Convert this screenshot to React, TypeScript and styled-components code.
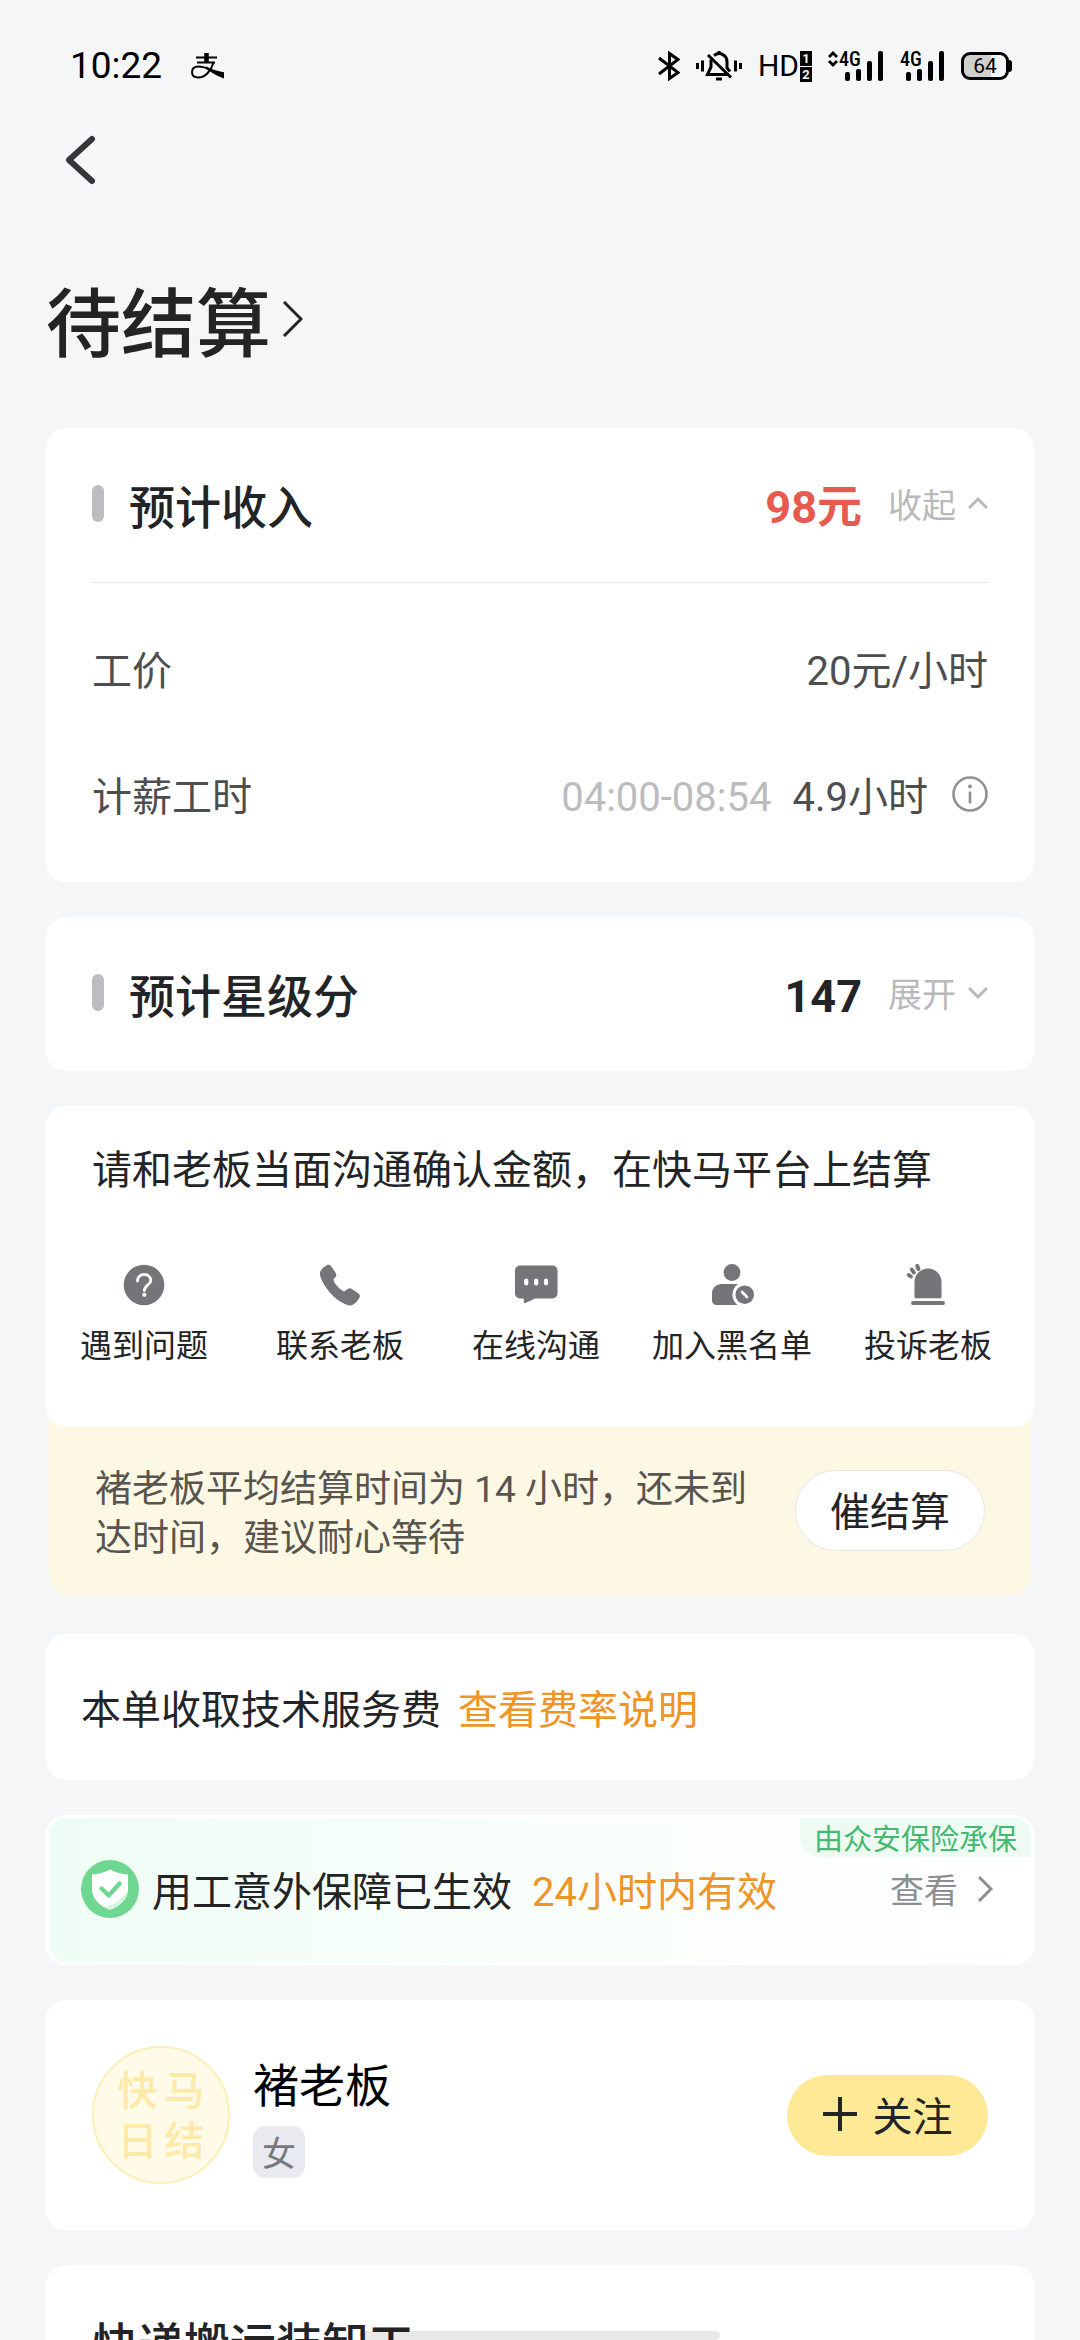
import React, { useState } from 'react';
import styled, { createGlobalStyle } from 'styled-components';

const CJK = `'Noto Sans CJK SC', sans-serif`;
const MIXED = `Roboto, 'Noto Sans CJK SC', sans-serif`;

const GlobalStyle = createGlobalStyle`
  * { box-sizing: border-box; }
  body { margin: 0; background: #f5f6f8; font-family: ${CJK}; color: #232426; }
  h1, h2, p, dl, dt, dd { margin: 0; font-weight: 400; }
  button { margin: 0; padding: 0; border: 0; background: none; font: inherit; color: inherit; cursor: pointer; }
  a { color: inherit; text-decoration: none; }
  svg { display: block; flex: none; }
`;

const Page = styled.div`
  height: 100vh;
  overflow: hidden;
`;

const StatusBar = styled.header`
  display: flex;
  align-items: center;
  justify-content: space-between;
  height: 132px;
  padding: 0 68px 0 70px;
  color: #000;
  font-family: Roboto, sans-serif;
`;

const StatusGroup = styled.div<{ $gap: number }>`
  display: flex;
  align-items: center;
  gap: ${(p) => p.$gap}px;
`;

const Clock = styled.time`
  font-size: 37px;
  line-height: 44px;
`;

const Network = styled.span`
  display: flex;
  align-items: center;
  gap: 1px;
`;

const HdText = styled.span`
  font-size: 30px;
  line-height: 36px;
`;

const SimBox = styled.span`
  display: grid;
  gap: 1px;
`;

const SimNumber = styled.span`
  width: 12px;
  height: 15px;
  background: #000;
  color: #f5f6f8;
  font-size: 13px;
  font-weight: 700;
  line-height: 15px;
  text-align: center;
`;

const Signal = styled.span`
  display: grid;
  grid-template-columns: auto auto;
  align-items: start;
  height: 30px;
`;

const SignalLabel = styled.span`
  grid-area: 1 / 1;
  font-size: 20px;
  font-weight: 500;
  line-height: 16px;
  font-family: 'Liberation Sans Narrow', 'Roboto Condensed', Roboto, sans-serif;
`;

const SignalBars = styled.svg`
  grid-area: 1 / 1 / 2 / 3;
  margin-left: 6px;
`;

const Battery = styled.span`
  display: flex;
  align-items: center;
`;

const BatteryBody = styled.span`
  width: 48px;
  height: 28px;
  border: 3px solid #000;
  border-radius: 9px;
  background: linear-gradient(90deg, #cfcfd0 64%, transparent 64%);
  font-size: 21px;
  font-weight: 400;
  line-height: 22px;
  text-align: center;
`;

const BatteryTip = styled.span`
  width: 3px;
  height: 12px;
  border-radius: 0 3px 3px 0;
  background: #000;
`;

const NavBar = styled.nav`
  display: flex;
  height: 56px;
  padding: 0 60px;
`;

const BackButton = styled.button`
  display: grid;
  place-items: center;
  width: 40px;
`;

const Title = styled.h1`
  padding: 75px 46px 53px;
`;

const TitleButton = styled.button`
  display: flex;
  align-items: center;
  gap: 11px;
  font-size: 75px;
  font-weight: 500;
  line-height: 112px;
`;

const Content = styled.main`
  display: flex;
  flex-direction: column;
  gap: 35px;
  padding: 0 46px;
`;

const Card = styled.section`
  flex: none;
  border-radius: 20px;
  background: #fff;
`;

const SectionHead = styled.div`
  display: flex;
  align-items: center;
  height: 154px;
  margin: 0 46px;
  padding-bottom: 3px;
`;

const Marker = styled.span`
  width: 12px;
  height: 37px;
  margin-right: 25px;
  border-radius: 6px;
  background: #bdbdc1;
`;

const Heading = styled.h2`
  flex: 1;
  font-size: 46px;
  font-weight: 500;
  line-height: 64px;
`;

const Amount = styled.strong<{ $color?: string }>`
  color: ${(p) => p.$color ?? '#232426'};
  font-size: 45px;
  font-weight: 700;
  line-height: 64px;
`;

const Mixed = styled.span`
  font-family: ${MIXED};
  line-height: 1;
`;

const Toggle = styled.button`
  display: flex;
  align-items: center;
  gap: 12px;
  margin-left: 26px;
  color: #b9b9bb;
  font-size: 34px;
  line-height: 48px;
`;

const Details = styled.dl`
  margin: 0 46px;
  padding: 22px 0 25px;
  border-top: 1px solid #e9e9ea;
`;

const DetailRow = styled.div`
  display: flex;
  align-items: center;
  justify-content: space-between;
  height: 126px;
  color: #4d4e50;
  font-size: 40px;
  line-height: 56px;
`;

const DetailValue = styled.dd`
  display: flex;
  align-items: center;
`;

const Muted = styled.span`
  margin-right: 21px;
  color: #bcbcbe;
`;

const InfoButton = styled.button`
  margin-left: 24px;
`;

const SettleCard = styled(Card)`
  display: flex;
  flex-direction: column;
  gap: 67px;
  height: 320px;
  padding-top: 32px;
`;

const Prompt = styled.p`
  padding: 0 46px;
  font-size: 40px;
  line-height: 58px;
`;

const Actions = styled.div`
  display: grid;
  grid-template-columns: repeat(5, 1fr);
  padding-right: 8px;
`;

const Action = styled.button`
  display: flex;
  flex-direction: column;
  align-items: center;
  gap: 12px;
  font-size: 32px;
  line-height: 48px;
  white-space: nowrap;
`;

const SettleGroup = styled.div`
  margin: 0 3px 4px;
  border-radius: 20px;
  background: #fdf8e4;

  > ${Card} { margin: 0 -3px; }
`;

const Notice = styled.div`
  display: flex;
  align-items: center;
  justify-content: space-between;
  gap: 36px;
  height: 169px;
  padding: 0 46px;
`;

const NoticeText = styled.p`
  color: #57554e;
  font-size: 37px;
  line-height: 49px;
`;

const PillButton = styled.button<{ $width: number; $fill: string; $border?: string }>`
  display: flex;
  flex: none;
  align-items: center;
  justify-content: center;
  gap: 16px;
  width: ${(p) => p.$width}px;
  height: 81px;
  padding-bottom: 3px;
  border: 1px solid ${(p) => p.$border ?? 'transparent'};
  border-radius: 41px;
  background: ${(p) => p.$fill} border-box;
  font-size: 40px;
  line-height: 56px;
`;

const FeeCard = styled(Card)`
  display: flex;
  align-items: center;
  gap: 17px;
  height: 146px;
  padding: 0 35px;
  font-size: 40px;
  line-height: 56px;
`;

const FeeLink = styled.a`
  color: #ee9526;
`;

const InsuranceCard = styled(Card)`
  position: relative;
  display: flex;
  align-items: center;
  height: 150px;
  padding: 0 38px 2px 32px;
  border: 3px solid #fff;
  background: linear-gradient(90deg, #effcf5, #f8fefa 45%, #fff);
  font-size: 40px;
  line-height: 56px;
`;

const InsuranceText = styled.span`
  margin-left: 13px;
`;

const Validity = styled.span`
  flex: 1;
  margin-left: 20px;
  color: #ee9526;
`;

const ViewLink = styled.a`
  display: flex;
  align-items: center;
  gap: 20px;
  color: #8d8e90;
  font-size: 34px;
  line-height: 48px;
`;

const Insurer = styled.span`
  position: absolute;
  top: 0;
  right: 0;
  padding: 0 14px;
  border-radius: 0 17px 0 20px;
  background: #edfbf2;
  color: #45b970;
  font-size: 29px;
  line-height: 39px;
`;

const BossCard = styled(Card)`
  display: flex;
  align-items: center;
  height: 230px;
  padding: 0 46px;
`;

const Avatar = styled.span`
  display: grid;
  grid-template-columns: 40px 40px;
  place-content: center;
  column-gap: 7px;
  width: 138px;
  height: 138px;
  padding-bottom: 4px;
  border: 2px solid #fbefb4;
  border-radius: 50%;
  background: #fffbe8;
  color: #fde9a8;
  font-size: 40px;
  font-weight: 500;
  line-height: 50px;
`;

const BossInfo = styled.div`
  display: flex;
  flex: 1;
  flex-direction: column;
  align-items: flex-start;
  gap: 14px;
  margin-left: 23px;
`;

const BossName = styled.h2`
  color: #000;
  font-size: 46px;
  line-height: 60px;
`;

const GenderTag = styled.span`
  width: 52px;
  border-radius: 12px;
  background: #e9eaf0;
  color: #77787b;
  font-size: 34px;
  line-height: 52px;
  text-align: center;
`;

const JobCard = styled(Card)`
  padding: 44px 46px;
`;

const HomeIndicator = styled.div`
  position: fixed;
  bottom: 0;
  left: 50%;
  width: 360px;
  height: 9px;
  margin-left: -180px;
  border-radius: 5px;
  background: rgba(0, 0, 0, 0.09);
`;

const Chevron = ({ d, w, h, stroke = 3 }: { d: string; w: number; h: number; stroke?: number }) => (
  <svg width={w} height={h} viewBox={`0 0 ${w} ${h}`} fill="none" stroke="currentColor" strokeWidth={stroke} aria-hidden="true">
    <path d={d} />
  </svg>
);

const AlipayMark = () => (
  <svg width="34" height="26" viewBox="0 0 34 26" fill="none" stroke="#000" aria-hidden="true">
    <path d="M5 4.500h21M6 9.500h18" strokeWidth="1.800" />
    <path d="M15.500 0v9" strokeWidth="4.500" />
    <path d="M22.500 9.500C20 18 14 24.500 7.500 24.500 3 24.500 1 22 1 19c0-3.500 2.500-5.500 6.500-5.500 3 0 6.500 1 10.500 2.500" strokeWidth="2" />
    <path d="M15 13.500c6 3 11 4.500 18 5.800v6.200C27 23.500 22 20.500 15 16z" fill="#000" stroke="none" />
  </svg>
);

const Bluetooth = () => (
  <svg width="22" height="30" viewBox="0 0 22 30" fill="none" stroke="#000" strokeWidth="3" aria-hidden="true">
    <path d="M1 7l19 14.500L11.500 27.500V2.500L20 8.500 1 23" />
  </svg>
);

const BellOff = () => (
  <svg width="46" height="30" viewBox="0 0 46 30" fill="none" stroke="#000" strokeWidth="3" aria-hidden="true">
    <path d="M1.500 12v6M6.500 9.500v11M44.500 12v6M39.500 9.500v11" />
    <path d="M15 8.500V16l-3.500 7.500H31M18 4.500c6-4.500 13 0 13 6V17l3 3.500" />
    <path d="M12 4l23 22.500" />
    <path d="M23 0v3M20 28h6" />
  </svg>
);

const DataArrows = () => (
  <svg width="10" height="30" viewBox="0 0 10 30" fill="none" stroke="#000" strokeWidth="2.800" aria-hidden="true">
    <path d="M1 6l4-4 4 4M1 10l4 4 4-4" />
  </svg>
);

const SignalIcon = () => (
  <Signal>
    <SignalLabel>4G</SignalLabel>
    <SignalBars width="39" height="30" viewBox="0 0 39 30" aria-hidden="true">
      <rect x="0" y="21" width="5" height="9" rx="2" />
      <rect x="11" y="18" width="5" height="12" rx="2" />
      <rect x="22" y="10" width="5" height="20" rx="2" />
      <rect x="33" y="0" width="5" height="30" rx="2" />
    </SignalBars>
  </Signal>
);

const InfoIcon = () => (
  <svg width="36" height="36" viewBox="0 0 36 36" fill="none" stroke="#8f9092" strokeWidth="2.600" aria-hidden="true">
    <circle cx="18" cy="18" r="16.500" />
    <path d="M18 15.500v12" />
    <circle cx="18" cy="10.500" r="1.900" fill="#8f9092" stroke="none" />
  </svg>
);

const ActionSvg = ({ children }: { children: React.ReactNode }) => (
  <svg width="44" height="44" viewBox="0 0 44 44" fill="#747578" aria-hidden="true">{children}</svg>
);

const QuestionIcon = () => (
  <ActionSvg>
    <circle cx="22" cy="22" r="20.300" />
    <path d="M15.500 18c0-4 3-6.500 6.800-6.500 3.700 0 6.500 2.500 6.500 6 0 4.500-6.500 5-6.500 10" fill="none" stroke="#fff" strokeWidth="2.800" strokeLinecap="round" />
    <circle cx="22.300" cy="31.800" r="2.100" fill="#fff" />
  </ActionSvg>
);

const PhoneIcon = () => (
  <ActionSvg>
    <path d="M9 2.200c1.300-.7 3-.5 4 .7l4.700 7c.9 1.400.8 3-.2 4.200l-2.200 2.400c1.200 4.500 6.300 9.800 10.700 12l3.800-2.500c1.300-.9 2.700-.9 4 0l6.400 4.200c1.700 1.200 2.200 2.900 1.200 4.500-1.700 3-4.600 6.500-7.600 7.600-2.300.7-4.700 0-7-1.200C15.500 35.700 6.500 25 2.700 14.500 2 12.500 1.600 10.500 2.300 8.600 3.400 5.800 6 3.800 9 2.200z" />
  </ActionSvg>
);

const ChatIcon = () => (
  <ActionSvg>
    <path d="M6 2.500h32.500a5 5 0 0 1 5 5v23a5 5 0 0 1-5 5H21L11.500 40c-1 .5-1.700 0-1.700-1v-3.500H6a5 5 0 0 1-5-5v-23a5 5 0 0 1 5-5z" />
    <path d="M12.200 17.500v3M22.200 17.500v3M32 17.500v3" stroke="#fff" strokeWidth="4.200" strokeLinecap="round" />
  </ActionSvg>
);

const BlockUserIcon = () => (
  <ActionSvg>
    <circle cx="22" cy="9.500" r="8.400" />
    <path d="M11 21h17a13 13 0 0 0-.5 21H6.500a4.500 4.500 0 0 1-4.500-4.500V30a9 9 0 0 1 9-9z" />
    <circle cx="34.700" cy="31.700" r="9.300" />
    <path d="M32 29l5 5" stroke="#fff" strokeWidth="2.800" strokeLinecap="round" />
  </ActionSvg>
);

const SirenIcon = () => (
  <ActionSvg>
    <path d="M8.500 34.500V19a13.500 13.500 0 0 1 27 0v15.500q0 .8-.8.800H9.300q-.8 0-.8-.8z" />
    <rect x="5" y="38" width="34" height="4" rx="2" />
    <path d="M2.800 12l2 1.500M5.800 6.500l2 3M11.300 3l1 3" stroke="#747578" strokeWidth="4" strokeLinecap="round" />
  </ActionSvg>
);

const ShieldIcon = () => (
  <svg width="58" height="58" viewBox="0 0 58 58" aria-hidden="true">
    <circle cx="29" cy="29" r="29" fill="#70d792" />
    <path d="M29 9.500c5.500 3 11.500 4.500 18 5v15c0 9-8 16.500-18 20.500-10-4-18-11.500-18-20.500v-15c6.500-.5 12.500-2 18-5z" fill="#fff" />
    <path d="M47 30c0 9-8 16-18 20l-4-3c9-2 17-9 22-17z" fill="#d4f5df" />
    <path d="M20.500 28.500l7.200 7 11-12" fill="none" stroke="#70d792" strokeWidth="4.400" strokeLinecap="round" strokeLinejoin="round" />
  </svg>
);

const UP = 'M1 12L10 3l9 9';
const DOWN = 'M1 3l9 9 9-9';

const actions = [
  { label: '遇到问题', icon: <QuestionIcon /> },
  { label: '联系老板', icon: <PhoneIcon /> },
  { label: '在线沟通', icon: <ChatIcon /> },
  { label: '加入黑名单', icon: <BlockUserIcon /> },
  { label: '投诉老板', icon: <SirenIcon /> },
];

export default function App() {
  const [incomeOpen, setIncomeOpen] = useState(true);
  const [starOpen, setStarOpen] = useState(false);

  return (
    <Page>
      <GlobalStyle />
      <StatusBar>
        <StatusGroup $gap={29}>
          <Clock>10:22</Clock>
          <AlipayMark />
        </StatusGroup>
        <StatusGroup $gap={16}>
          <Bluetooth />
          <BellOff />
          <Network>
            <HdText>HD</HdText>
            <SimBox>
              <SimNumber>1</SimNumber>
              <SimNumber>2</SimNumber>
            </SimBox>
          </Network>
          <Network>
            <DataArrows />
            <SignalIcon />
          </Network>
          <SignalIcon />
          <Battery>
            <BatteryBody>64</BatteryBody>
            <BatteryTip />
          </Battery>
        </StatusGroup>
      </StatusBar>

      <NavBar>
        <BackButton aria-label="返回">
          <svg width="32" height="50" viewBox="0 0 32 50" fill="none" stroke="#34363a" strokeWidth="6" strokeLinecap="round" strokeLinejoin="round">
            <path d="M28 4L5 25l23 21" />
          </svg>
        </BackButton>
      </NavBar>

      <Title>
        <TitleButton>
          待结算
          <Chevron w={21} h={36} d="M2 1l17 17L2 35" />
        </TitleButton>
      </Title>

      <Content>
        <Card>
          <SectionHead>
            <Marker />
            <Heading>预计收入</Heading>
            <Amount $color="#e65a50"><Mixed>98元</Mixed></Amount>
            <Toggle aria-expanded={incomeOpen} onClick={() => setIncomeOpen(!incomeOpen)}>
              {incomeOpen ? '收起' : '展开'}
              <Chevron w={20} h={15} d={incomeOpen ? UP : DOWN} />
            </Toggle>
          </SectionHead>
          {incomeOpen && (
            <Details>
              <DetailRow>
                <dt>工价</dt>
                <DetailValue><span><Mixed>20元/小时</Mixed></span></DetailValue>
              </DetailRow>
              <DetailRow>
                <dt>计薪工时</dt>
                <DetailValue>
                  <Muted><Mixed>04:00-08:54</Mixed></Muted>
                  <span><Mixed>4.9小时</Mixed></span>
                  <InfoButton aria-label="工时说明"><InfoIcon /></InfoButton>
                </DetailValue>
              </DetailRow>
            </Details>
          )}
        </Card>

        <Card>
          <SectionHead>
            <Marker />
            <Heading>预计星级分</Heading>
            <Amount><Mixed>147</Mixed></Amount>
            <Toggle aria-expanded={starOpen} onClick={() => setStarOpen(!starOpen)}>
              {starOpen ? '收起' : '展开'}
              <Chevron w={20} h={15} d={starOpen ? UP : DOWN} />
            </Toggle>
          </SectionHead>
        </Card>

        <SettleGroup>
          <SettleCard>
            <Prompt>请和老板当面沟通确认金额，在快马平台上结算</Prompt>
            <Actions>
              {actions.map((a) => (
                <Action key={a.label}>
                  {a.icon}
                  {a.label}
                </Action>
              ))}
            </Actions>
          </SettleCard>
          <Notice>
            <NoticeText><Mixed>褚老板平均结算时间为 14 小时，还未到达时间，建议耐心等待</Mixed></NoticeText>
            <PillButton $width={190} $fill="#fff" $border="#e6e6e8">催结算</PillButton>
          </Notice>
        </SettleGroup>

        <FeeCard>
          <span>本单收取技术服务费</span>
          <FeeLink href="#fee">查看费率说明</FeeLink>
        </FeeCard>

        <InsuranceCard>
          <ShieldIcon />
          <InsuranceText>用工意外保障已生效</InsuranceText>
          <Validity><Mixed>24小时内有效</Mixed></Validity>
          <ViewLink href="#insurance">
            查看
            <Chevron w={15} h={26} d="M1 1l12 12L1 25" />
          </ViewLink>
          <Insurer>由众安保险承保</Insurer>
        </InsuranceCard>

        <BossCard>
          <Avatar>
            <span>快</span>
            <span>马</span>
            <span>日</span>
            <span>结</span>
          </Avatar>
          <BossInfo>
            <BossName>褚老板</BossName>
            <GenderTag>女</GenderTag>
          </BossInfo>
          <PillButton $width={201} $fill="#fde996">
            <Chevron w={34} h={34} d="M0 17h34M17 0v34" stroke={4} />
            关注
          </PillButton>
        </BossCard>

        <JobCard>
          <Heading>快递搬运装卸工</Heading>
        </JobCard>
      </Content>
      <HomeIndicator />
    </Page>
  );
}
